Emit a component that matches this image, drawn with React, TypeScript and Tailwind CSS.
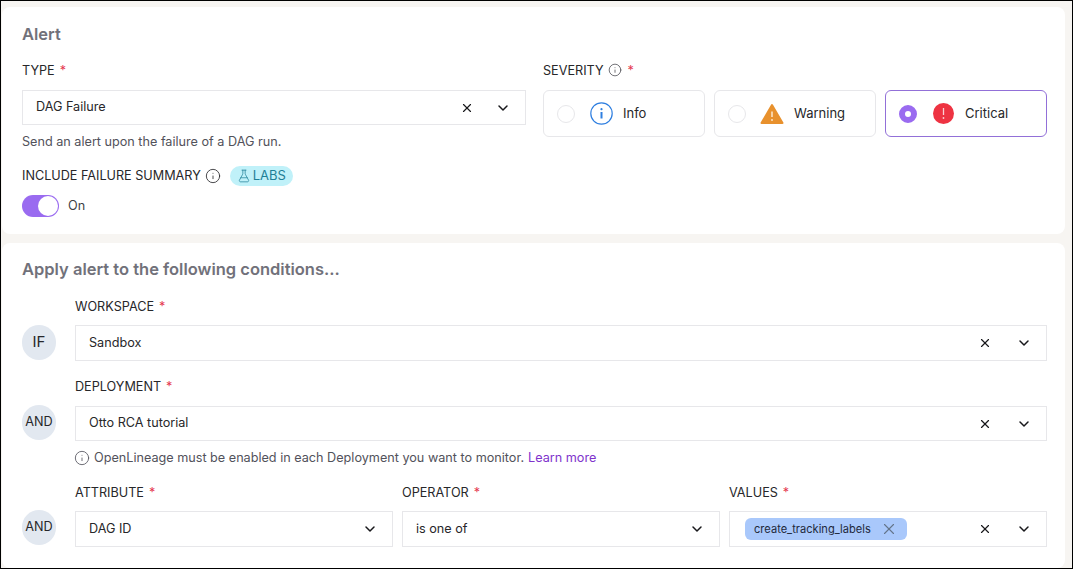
import { ChevronDown, FlaskConical, Info, X } from "lucide-react";
import type { ReactNode } from "react";

function Label({ children, info }: { children: ReactNode; info?: boolean }) {
  return (
    <div className="flex h-[16px] items-center text-[12.65px] leading-[16px] text-[#27272a]">
      <span>{children}</span>
      {info && <Info size={14} strokeWidth={1.25} className="ml-[4px] mb-[2px] text-[#3f3f46]" />}
      <span className={`text-[#e5384f] ${info ? "ml-[6px]" : "ml-[5px]"}`}>*</span>
    </div>
  );
}

function Select({
  children,
  clear = true,
  narrow,
  className,
}: {
  children: ReactNode;
  clear?: boolean;
  narrow?: boolean;
  className: string;
}) {
  return (
    <div className={`flex items-center border border-[#e7e7ea] bg-white pl-[13px] pr-[14px] text-[12.65px] text-[#27272a] ${className}`}>
      {children}
      <div className="ml-auto flex items-center text-[#18181b]">
        {clear && <X size={14} strokeWidth={2} className={narrow ? "mr-[21px]" : "mr-[24px]"} />}
        <ChevronDown size={16} strokeWidth={2.25} />
      </div>
    </div>
  );
}

function SeverityOption({ icon, label, selected }: { icon: ReactNode; label: string; selected?: boolean }) {
  return (
    <div
      className={`flex h-[47px] items-center rounded-[6px] border pl-[13px] text-[13px] text-[#27272a] ${
        selected ? "border-[#9270d8]" : "border-[#e7e7ea]"
      }`}
    >
      {selected ? (
        <span className="h-[18px] w-[18px] rounded-full border-[6px] border-[#9a6bf0] bg-white" />
      ) : (
        <span className="h-[18px] w-[18px] rounded-full border border-[#e7e7ea]" />
      )}
      <span className="ml-[14px] flex w-[24px] justify-center">{icon}</span>
      <span className="ml-[10px]">{label}</span>
    </div>
  );
}

function Badge({ children, className }: { children: string; className: string }) {
  return (
    <div className={`flex h-[35px] w-[34px] flex-none items-center justify-center rounded-full bg-[#e2e8f0] text-[#27272a] ${className}`}>
      {children}
    </div>
  );
}

function WarningIcon() {
  return (
    <svg width="24" height="22" viewBox="0 0 24 22">
      <path d="M12 2 L22.5 20 H1.5 Z" fill="#e8912d" stroke="#e8912d" strokeWidth="2" strokeLinejoin="round" />
      <path d="M12 8.5 V14" stroke="#fbe3c4" strokeWidth="1.6" />
      <circle cx="12" cy="17" r="1" fill="#fbe3c4" />
    </svg>
  );
}

function CriticalIcon() {
  return (
    <svg width="21" height="21" viewBox="0 0 21 21">
      <circle cx="10.5" cy="10.5" r="10.5" fill="#ee3342" />
      <path d="M10.5 5 V12" stroke="#fbd0d4" strokeWidth="1.3" />
      <circle cx="10.5" cy="15" r="0.9" fill="#fbd0d4" />
    </svg>
  );
}

function InfoIcon() {
  return (
    <svg width="23" height="23" viewBox="0 0 23 23">
      <circle cx="11.5" cy="11.5" r="10.7" fill="none" stroke="#2f7fe0" strokeWidth="1.2" />
      <circle cx="11.5" cy="7.2" r="1.1" fill="#2f7fe0" />
      <path d="M11.5 10 V16.5" stroke="#2f7fe0" strokeWidth="2" />
    </svg>
  );
}

export default function App() {
  return (
    <div className="flex h-[569px] w-[1073px] flex-col gap-[9px] overflow-hidden border border-black bg-[#f7f5f2] pl-[1px] pr-[7px] pt-[6px] font-['Inter',sans-serif]">
      <section className="h-[227px] flex-none rounded-[8px] bg-white pl-[20px] pr-[18px] pt-[17px]">
        <h2 className="text-[16.5px] font-semibold leading-[20px] text-[#71717a]">Alert</h2>
        <div className="mt-[19px] grid grid-cols-[504px_504px] gap-x-[17px]">
          <div>
            <Label>TYPE</Label>
            <Select narrow className="mt-[11px] h-[35px]">DAG Failure</Select>
            <p className="mt-[9px] text-[12.65px] leading-[16px] text-[#52525b]">Send an alert upon the failure of a DAG run.</p>
            <div className="mt-[16px] flex h-[20px] items-center text-[12.65px] text-[#27272a]">
              <span>INCLUDE FAILURE SUMMARY</span>
              <Info size={16} strokeWidth={1.25} className="ml-[4px]" />
              <span className="ml-[9px] flex h-[20px] items-center rounded-full bg-[#c0f1f9] pl-[7px] pr-[7px] text-[13px] text-[#1f7f96]">
                <FlaskConical size={14} strokeWidth={1.25} className="mr-[2px]" />
                LABS
              </span>
            </div>
            <div className="mt-[9px] flex items-center">
              <span className="flex h-[22px] w-[37px] items-center justify-end rounded-full bg-[#9a6bf0] pr-[1px]">
                <span className="h-[20px] w-[20px] rounded-full bg-white" />
              </span>
              <span className="ml-[9px] text-[12.65px] text-[#3f3f46]">On</span>
            </div>
          </div>
          <div>
            <Label info>SEVERITY</Label>
            <div className="mt-[11px] grid grid-cols-3 gap-[9px]">
              <SeverityOption icon={<InfoIcon />} label="Info" />
              <SeverityOption icon={<WarningIcon />} label="Warning" />
              <SeverityOption icon={<CriticalIcon />} label="Critical" selected />
            </div>
          </div>
        </div>
      </section>

      <section className="flex-1 rounded-[8px] bg-white pl-[20px] pr-[18px] pt-[16px]">
        <h2 className="text-[16.5px] font-semibold leading-[20px] text-[#71717a]">Apply alert to the following conditions...</h2>

        <div className="mt-[20px] flex items-end gap-[19px]">
          <Badge className="mb-[1px] text-[15px]">IF</Badge>
          <div className="flex-1">
            <Label>WORKSPACE</Label>
            <Select className="mt-[10px] h-[36px]">Sandbox</Select>
          </div>
        </div>

        <div className="mt-[18px] flex items-end gap-[19px]">
          <Badge className="mb-[1px] text-[12.65px]">AND</Badge>
          <div className="flex-1">
            <Label>DEPLOYMENT</Label>
            <Select className="mt-[11px] h-[35px]">Otto RCA tutorial</Select>
          </div>
        </div>

        <p className="ml-[52px] mt-[9px] flex h-[16px] items-center text-[12.65px] text-[#52525b]">
          <Info size={16} strokeWidth={1.25} className="mr-[4px]" />
          OpenLineage must be enabled in each Deployment you want to monitor.
          <span className="ml-[4px] text-[#8033cc]">Learn more</span>
        </p>

        <div className="mt-[19px] flex items-end gap-[19px]">
          <Badge className="mb-[2px] text-[12.65px]">AND</Badge>
          <div className="grid flex-1 grid-cols-3 gap-x-[9px]">
            <div>
              <Label>ATTRIBUTE</Label>
              <Select clear={false} className="mt-[10px] h-[36px]">DAG ID</Select>
            </div>
            <div>
              <Label>OPERATOR</Label>
              <Select clear={false} className="mt-[10px] h-[36px]">is one of</Select>
            </div>
            <div>
              <Label>VALUES</Label>
              <Select className="mt-[10px] h-[36px] pl-[15px]">
                <span className="flex h-[22px] items-center rounded-[6px] bg-[#a9c8fb] pl-[9px] pr-[9px] text-[11.1px] text-[#1e293b]">
                  create_tracking_labels
                  <X size={18} strokeWidth={1.5} className="ml-[9px] text-[#64748b]" />
                </span>
              </Select>
            </div>
          </div>
        </div>
      </section>
    </div>
  );
}
